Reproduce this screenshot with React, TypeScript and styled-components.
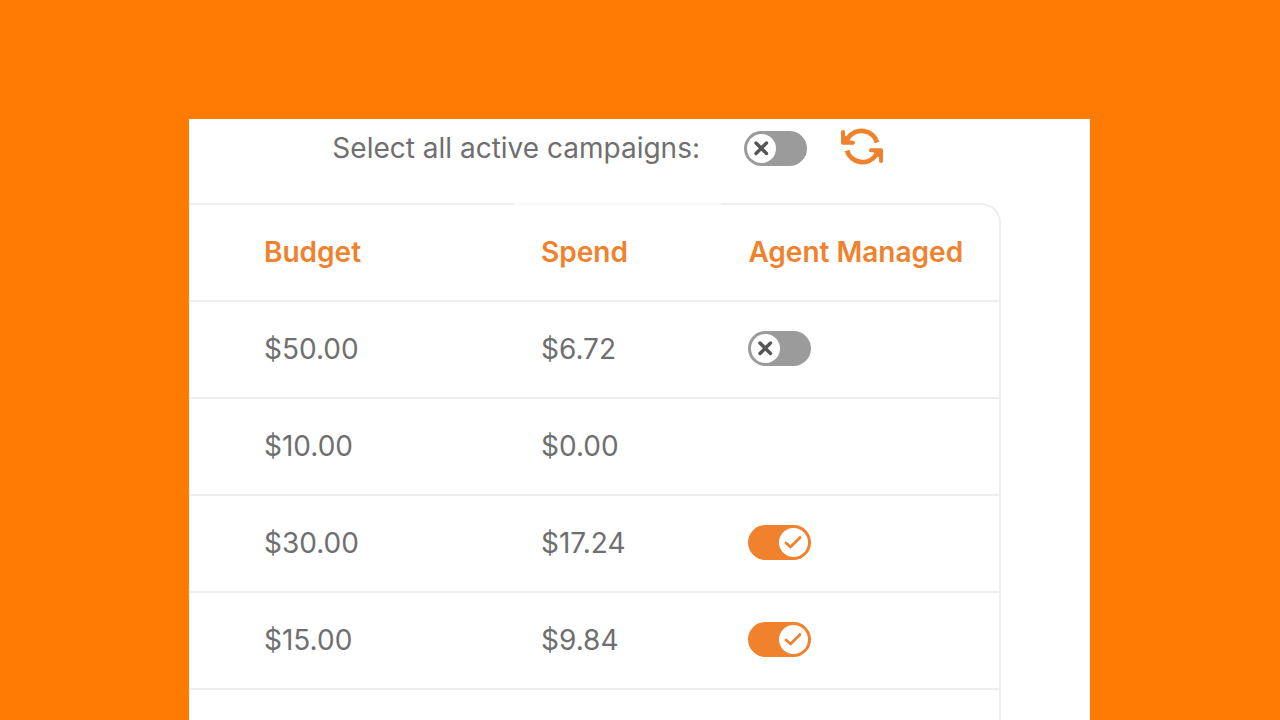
import React, { useState } from "react";
import styled, { createGlobalStyle } from "styled-components";

const brand = "#f0812d";
const line = "#eeeeee";

const GlobalStyle = createGlobalStyle`
  *, *::before, *::after { box-sizing: border-box; }
  body {
    margin: 0;
    background: #ff7b04;
    color: #6f6f6f;
    font-family: Inter, "Liberation Sans", sans-serif;
    font-size: 28px;
    line-height: 36px;
  }
`;

const Page = styled.main`
  display: flex;
  height: 100vh;
  padding: 119px 190px 0 189px;
  overflow: hidden;
`;

const Card = styled.section`
  flex: 1;
  min-width: 0;
  display: flex;
  flex-direction: column;
  padding-right: 89px;
  background: #fff;
`;

const Toolbar = styled.div`
  display: flex;
  justify-content: flex-end;
  align-items: center;
  height: 84px;
  padding: 0 118px 26px 0;
`;

const ToolbarLabel = styled.label`
  margin-right: 44px;
  white-space: nowrap;
`;

const RefreshButton = styled.button`
  display: flex;
  margin: 0 0 0 34px;
  padding: 0 0 4px;
  border: 0;
  background: none;
  color: ${brand};
  cursor: pointer;
`;

const TableFrame = styled.div`
  flex: 1;
  border: 2px solid ${line};
  border-width: 2px 2px 0 0;
  border-top-right-radius: 20px;
`;

const Table = styled.table`
  width: 100%;
  table-layout: fixed;
  border-collapse: separate;
  border-spacing: 0;
`;

const HeadCell = styled.th<{ $width?: string; $faded?: boolean }>`
  position: relative;
  width: ${(p) => p.$width ?? "auto"};
  height: 97px;
  padding: 0 0 2px 75px;
  border-bottom: 2px solid ${line};
  color: ${brand};
  font-weight: 600;
  text-align: left;
  white-space: nowrap;

  &::after {
    content: ${(p) => (p.$faded ? '""' : "none")};
    position: absolute;
    top: -2px;
    left: 48px;
    width: 100%;
    height: 2px;
    background: #f9f9f9;
  }
`;

const Cell = styled.td`
  height: 97px;
  padding: 0 0 2px 75px;
  border-bottom: 2px solid ${line};
`;

const SwitchBox = styled.span`
  position: relative;
  display: block;
  width: 63px;
  height: 35px;
`;

const SwitchInput = styled.input`
  position: absolute;
  inset: 0;
  width: 100%;
  height: 100%;
  margin: 0;
  opacity: 0;
  cursor: pointer;
`;

const Track = styled.span<{ $on: boolean }>`
  display: flex;
  justify-content: ${(p) => (p.$on ? "flex-end" : "flex-start")};
  height: 100%;
  padding: 3px;
  border-radius: 18px;
  background: ${(p) => (p.$on ? brand : "#9b9b9b")};
`;

const Thumb = styled.svg`
  width: 29px;
  height: 29px;
  border-radius: 50%;
  background: #fff;
  fill: none;
  stroke-linecap: round;
  stroke-linejoin: round;
`;

type SwitchProps = { id?: string; label?: string; initial: boolean };

function Switch({ id, label, initial }: SwitchProps) {
  const [on, setOn] = useState(initial);
  return (
    <SwitchBox>
      <Track $on={on}>
        <Thumb viewBox="0 0 29 29" aria-hidden="true">
          {on ? (
            <path d="M7 15 L11.5 19 L21 9.5" stroke={brand} strokeWidth="2.8" />
          ) : (
            <path d="M9 9 L19.5 19.5 M19.5 9 L9 19.5" stroke="#555" strokeWidth="3.4" />
          )}
        </Thumb>
      </Track>
      <SwitchInput
        id={id}
        type="checkbox"
        role="switch"
        aria-label={label}
        checked={on}
        onChange={(e) => setOn(e.target.checked)}
      />
    </SwitchBox>
  );
}

function RefreshIcon() {
  return (
    <svg width="42" height="37" viewBox="0 0 42 37" fill="none" stroke="currentColor" strokeWidth="4.8" strokeLinecap="butt" strokeLinejoin="round" aria-hidden="true">
      <path d="M36 14.5 A16.2 16.2 0 0 0 7 10 L3 14.5" />
      <path d="M2 4 V14.8 H12" strokeWidth="4" strokeLinecap="round" />
      <path d="M2 6 L11 14.8 H2 Z" fill="currentColor" strokeWidth="1" />
      <path d="M6 22.5 A16.2 16.2 0 0 0 35 27 L39 22.5" />
      <path d="M40 33 V22.2 H30" strokeWidth="4" strokeLinecap="round" />
      <path d="M40 31 L31 22.2 H40 Z" fill="currentColor" strokeWidth="1" />
    </svg>
  );
}

const campaigns: { budget: string; spend: string; managed?: boolean }[] = [
  { budget: "$50.00", spend: "$6.72", managed: false },
  { budget: "$10.00", spend: "$0.00" },
  { budget: "$30.00", spend: "$17.24", managed: true },
  { budget: "$15.00", spend: "$9.84", managed: true },
];

export default function App() {
  return (
    <>
      <GlobalStyle />
      <Page>
        <Card>
          <Toolbar>
            <ToolbarLabel htmlFor="select-all">Select all active campaigns:</ToolbarLabel>
            <Switch id="select-all" initial={false} />
            <RefreshButton type="button" aria-label="Refresh">
              <RefreshIcon />
            </RefreshButton>
          </Toolbar>
          <TableFrame>
            <Table>
              <thead>
                <tr>
                  <HeadCell scope="col" $width="34.2%">Budget</HeadCell>
                  <HeadCell scope="col" $width="25.6%" $faded>Spend</HeadCell>
                  <HeadCell scope="col">Agent Managed</HeadCell>
                </tr>
              </thead>
              <tbody>
                {campaigns.map((c) => (
                  <tr key={c.budget}>
                    <Cell>{c.budget}</Cell>
                    <Cell>{c.spend}</Cell>
                    <Cell>
                      {c.managed !== undefined && (
                        <Switch label="Agent managed" initial={c.managed} />
                      )}
                    </Cell>
                  </tr>
                ))}
              </tbody>
            </Table>
          </TableFrame>
        </Card>
      </Page>
    </>
  );
}
